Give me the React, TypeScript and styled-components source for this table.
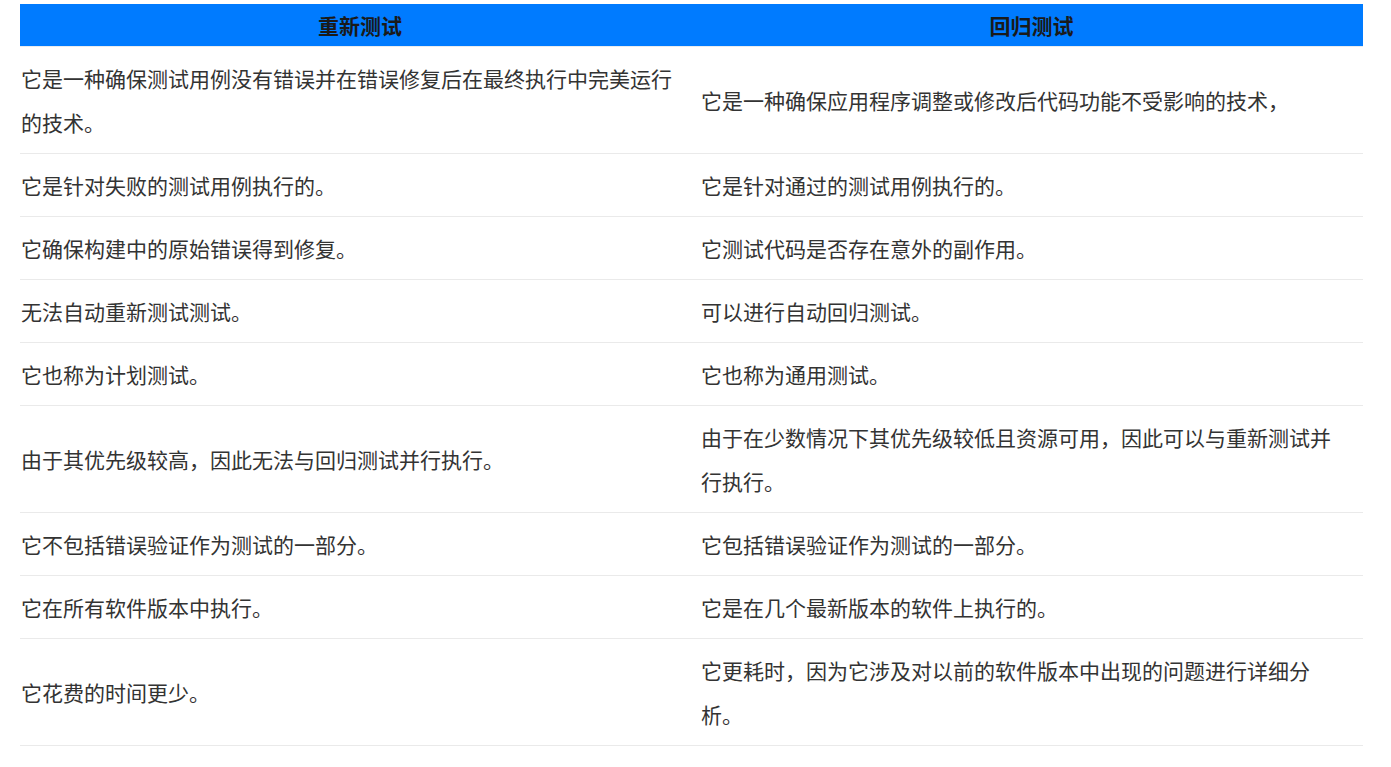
import React from "react";
import styled, { createGlobalStyle } from "styled-components";

const GlobalStyle = createGlobalStyle`
  html, body {
    margin: 0;
    padding: 0;
    background: #ffffff;
  }
  body {
    font-family: "Noto Sans CJK SC", "Noto Sans", sans-serif;
  }
`;

const Page = styled.div`
  padding: 4px 28px 0 20px;
`;

const Table = styled.div`
  display: grid;
  grid-template-columns: 680px 663px;
  width: 1343px;
`;

const HeadCell = styled.div`
  background: #007bff;
  color: #1a1a1a;
  font-weight: 700;
  font-size: 21px;
  height: 42px;
  line-height: 42px;
  text-align: center;
  border-bottom: 1px solid #e9ecef;
`;

const Cell = styled.div`
  display: flex;
  align-items: center;
  color: #333333;
  font-size: 21px;
  line-height: 44px;
  padding: 9px 15px 9px 1px;
  border-bottom: 1px solid #eaeaea;
`;

const rows: [string, string][] = [
  [
    "它是一种确保测试用例没有错误并在错误修复后在最终执行中完美运行的技术。",
    "它是一种确保应用程序调整或修改后代码功能不受影响的技术，",
  ],
  ["它是针对失败的测试用例执行的。", "它是针对通过的测试用例执行的。"],
  ["它确保构建中的原始错误得到修复。", "它测试代码是否存在意外的副作用。"],
  ["无法自动重新测试测试。", "可以进行自动回归测试。"],
  ["它也称为计划测试。", "它也称为通用测试。"],
  [
    "由于其优先级较高，因此无法与回归测试并行执行。",
    "由于在少数情况下其优先级较低且资源可用，因此可以与重新测试并行执行。",
  ],
  ["它不包括错误验证作为测试的一部分。", "它包括错误验证作为测试的一部分。"],
  ["它在所有软件版本中执行。", "它是在几个最新版本的软件上执行的。"],
  [
    "它花费的时间更少。",
    "它更耗时，因为它涉及对以前的软件版本中出现的问题进行详细分析。",
  ],
];

export default function App() {
  return (
    <>
      <GlobalStyle />
      <Page>
        <Table>
          <HeadCell>重新测试</HeadCell>
          <HeadCell>回归测试</HeadCell>
          {rows.map(([a, b], i) => (
            <React.Fragment key={i}>
              <Cell>{a}</Cell>
              <Cell>{b}</Cell>
            </React.Fragment>
          ))}
        </Table>
      </Page>
    </>
  );
}
